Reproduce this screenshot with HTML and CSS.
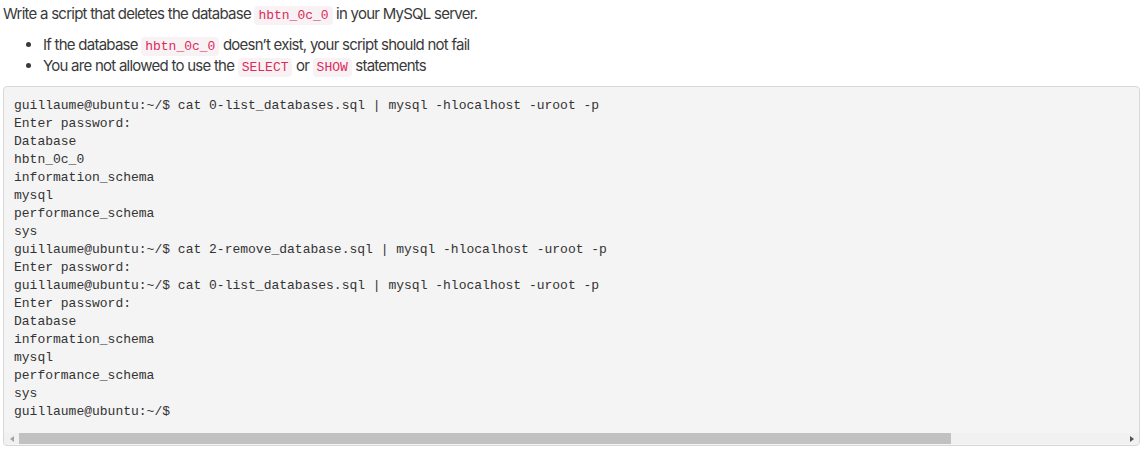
FILE: index.html
```html
<!DOCTYPE html>
<html>
<head>
<meta charset="utf-8">
<link rel="stylesheet" href="styles.css">
</head>
<body>
<p class="lead">Write a script that deletes the database <code>hbtn_0c_0</code> in your MySQL server.</p>
<ul class="rules">
<li>If the database <code>hbtn_0c_0</code> doesn’t exist, your script should not fail</li>
<li>You are not allowed to use the <code>SELECT</code> or <code>SHOW</code> statements</li>
</ul>
<div class="codebox">
<pre class="code">guillaume@ubuntu:~/$ cat 0-list_databases.sql | mysql -hlocalhost -uroot -p
Enter password: 
Database
hbtn_0c_0
information_schema
mysql
performance_schema
sys
guillaume@ubuntu:~/$ cat 2-remove_database.sql | mysql -hlocalhost -uroot -p
Enter password: 
guillaume@ubuntu:~/$ cat 0-list_databases.sql | mysql -hlocalhost -uroot -p
Enter password: 
Database
information_schema
mysql
performance_schema
sys
guillaume@ubuntu:~/$ </pre>
<div class="scrollbar">
<span class="arrow arrow-left"></span>
<div class="track"><div class="thumb"></div></div>
<span class="arrow arrow-right"></span>
</div>
</div>
</body>
</html>
```
FILE: styles.css
```css
html, body {
  margin: 0;
  background: #ffffff;
}
body {
  padding: 0 7px 0 3px;
  font-family: Inter, "Noto Sans", sans-serif;
  font-size: 15px;
  color: #3a3a3a;
  letter-spacing: -0.75px;
}
.lead {
  margin: 3px 0 0;
  line-height: 21px;
}
.rules {
  margin: 10px 0 10px;
  padding-left: 40px;
  line-height: 21px;
}
code {
  font-family: "Liberation Mono", monospace;
  font-size: 13px;
  line-height: 1;
  letter-spacing: 0;
  color: #dc2a5c;
  background: #f9f2f4;
  border-radius: 4px;
  padding: 2px 4px;
}
.codebox {
  border: 1px solid #d8d8d8;
  border-radius: 4px;
  background: #f4f4f4;
  overflow: hidden;
}
.code {
  margin: 0;
  padding: 10px 10px 12px;
  font-family: "Liberation Mono", monospace;
  font-size: 13px;
  line-height: 18px;
  color: #333333;
  letter-spacing: 0;
  white-space: pre;
  overflow: hidden;
}
.scrollbar {
  display: flex;
  align-items: center;
  height: 11px;
  background: #f1f1f1;
  margin-bottom: 1px;
}
.arrow {
  width: 15px;
  height: 11px;
  display: flex;
  align-items: center;
  justify-content: center;
  flex: none;
}
.arrow::before {
  content: "";
  width: 0;
  height: 0;
  border-top: 3.5px solid transparent;
  border-bottom: 3.5px solid transparent;
}
.arrow-left::before {
  border-right: 4px solid #a3a3a3;
}
.arrow-right::before {
  border-left: 4px solid #505050;
}
.track {
  flex: 1;
  height: 11px;
}
.thumb {
  width: 932px;
  height: 11px;
  background: #c1c1c1;
}
```
